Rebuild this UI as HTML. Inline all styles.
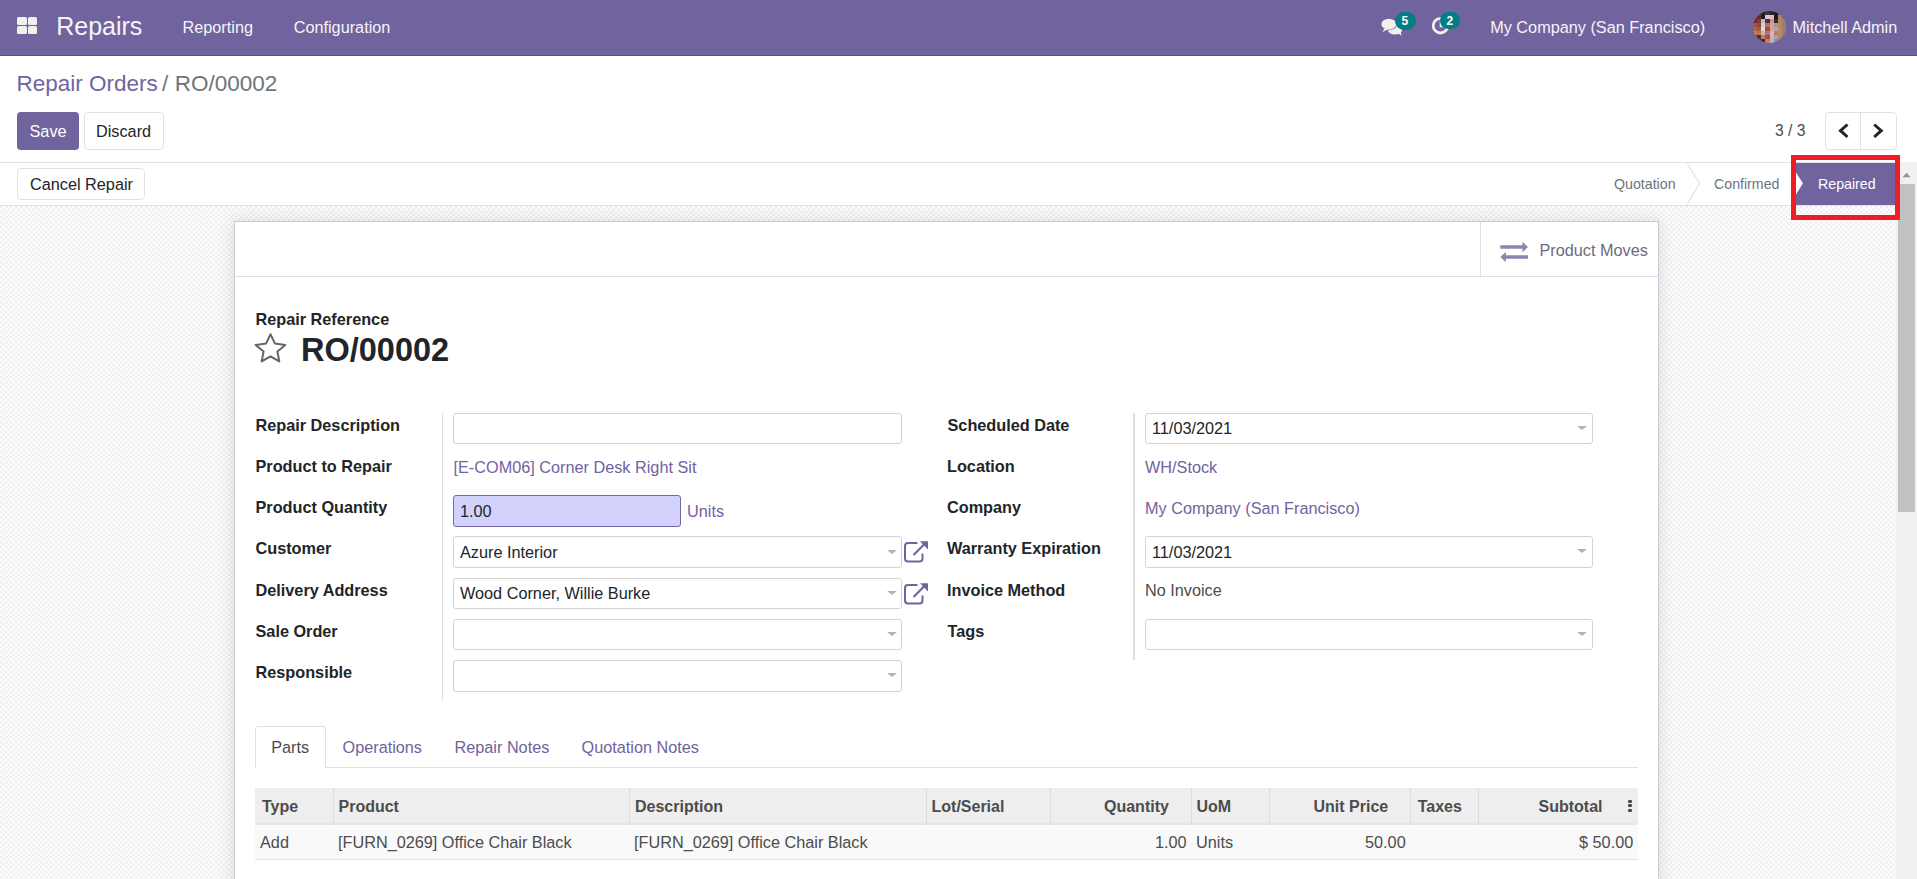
<!DOCTYPE html>
<html><head><meta charset="utf-8">
<style>
*{box-sizing:border-box;margin:0;padding:0}
html,body{width:1917px;height:879px;overflow:hidden;background:#fff;font-family:"Liberation Sans",sans-serif;color:#212529}
.a{position:absolute}
.t{position:absolute;white-space:nowrap;line-height:1}
.nav{left:0;top:0;width:1917px;height:56px;background:#71639e;border-bottom:1px solid #5a4f86}
.nt{color:#f5f5f5;font-size:16.25px}
.btn{position:absolute;border:1px solid #dee2e6;border-radius:4px;background:#fff}
.lbl{font-weight:bold;font-size:16.25px;color:#212529}
.inp{position:absolute;border:1px solid #d4d4d4;border-radius:3px;background:#fff;height:31px}
.val{font-size:16.25px;color:#212529}
.lnk{color:#71639e}
.caret{position:absolute;width:0;height:0;border-left:5px solid transparent;border-right:5px solid transparent;border-top:4.5px solid #b4b4b4}
.th{font-weight:bold;font-size:16px;color:#4c4c4c}
.td{font-size:16.25px;color:#4c4c4c}
.vsep{position:absolute;width:1px;background:#dcdcdc}
</style></head>
<body>
<!-- NAVBAR -->
<div class="a nav"></div>
<div class="a" style="left:17px;top:17px;width:9.5px;height:8px;background:#f0f0f0;border-radius:1.5px"></div>
<div class="a" style="left:27.5px;top:17px;width:9.5px;height:8px;background:#f0f0f0;border-radius:1.5px"></div>
<div class="a" style="left:17px;top:26px;width:9.5px;height:8px;background:#f0f0f0;border-radius:1.5px"></div>
<div class="a" style="left:27.5px;top:26px;width:9.5px;height:8px;background:#f0f0f0;border-radius:1.5px"></div>
<div class="t nt" style="left:56.2px;top:14.4px;font-size:25px">Repairs</div>
<div class="t nt" style="left:182.5px;top:18.8px">Reporting</div>
<div class="t nt" style="left:293.7px;top:18.8px">Configuration</div>
<div class="t nt" style="left:1490.2px;top:19.3px">My Company (San Francisco)</div>
<div class="t nt" style="left:1792.5px;top:19px">Mitchell Admin</div>

<!-- nav icons -->
<svg class="a" style="left:1378px;top:15px" width="26" height="24" viewBox="0 0 26 24">
 <ellipse cx="17" cy="14.6" rx="7.2" ry="5" fill="#f0f0f0"/>
 <path d="M19.5 18 L23.6 20.8 L22.6 16.5Z" fill="#f0f0f0"/>
 <ellipse cx="10.8" cy="9.2" rx="8.1" ry="6.1" fill="#71639e"/>
 <ellipse cx="10.8" cy="9.2" rx="7.4" ry="5.5" fill="#f0f0f0"/>
 <path d="M6.5 13.4 L4.3 17 L10 14.4Z" fill="#f0f0f0"/>
</svg>
<div class="a" style="left:1395px;top:12px;width:21px;height:18px;border-radius:9px;background:#017e84"></div>
<div class="t" style="left:1401.5px;top:15.2px;font-size:12px;font-weight:bold;color:#fff">5</div>
<svg class="a" style="left:1430px;top:15px" width="22" height="22" viewBox="0 0 22 22">
 <circle cx="10.5" cy="10.7" r="7.3" fill="none" stroke="#f0f0f0" stroke-width="2.8"/>
 <path d="M10.5 6 V11.5 H14" fill="none" stroke="#f0f0f0" stroke-width="1.6"/>
</svg>
<div class="a" style="left:1440px;top:12px;width:20px;height:17px;border-radius:9px;background:#017e84"></div>
<div class="t" style="left:1446.5px;top:15px;font-size:12px;font-weight:bold;color:#fff">2</div>
<div class="a" style="left:1753px;top:10.8px;width:33px;height:32px;border-radius:50%;overflow:hidden;background:#a07258"><i style="position:absolute;left:0.00px;top:0.00px;width:4.2px;height:4.1px;background:#7a6a98"></i><i style="position:absolute;left:4.12px;top:0.00px;width:4.2px;height:4.1px;background:#5a3a40"></i><i style="position:absolute;left:8.25px;top:0.00px;width:4.2px;height:4.1px;background:#2a2428"></i><i style="position:absolute;left:12.38px;top:0.00px;width:4.2px;height:4.1px;background:#3a3438"></i><i style="position:absolute;left:16.50px;top:0.00px;width:4.2px;height:4.1px;background:#2a2628"></i><i style="position:absolute;left:20.62px;top:0.00px;width:4.2px;height:4.1px;background:#1e1c20"></i><i style="position:absolute;left:24.75px;top:0.00px;width:4.2px;height:4.1px;background:#6a5a80"></i><i style="position:absolute;left:28.88px;top:0.00px;width:4.2px;height:4.1px;background:#7a6a98"></i><i style="position:absolute;left:0.00px;top:4.00px;width:4.2px;height:4.1px;background:#6a3a38"></i><i style="position:absolute;left:4.12px;top:4.00px;width:4.2px;height:4.1px;background:#6a2a24"></i><i style="position:absolute;left:8.25px;top:4.00px;width:4.2px;height:4.1px;background:#1e1c20"></i><i style="position:absolute;left:12.38px;top:4.00px;width:4.2px;height:4.1px;background:#d8c8d0"></i><i style="position:absolute;left:16.50px;top:4.00px;width:4.2px;height:4.1px;background:#e0b8c4"></i><i style="position:absolute;left:20.62px;top:4.00px;width:4.2px;height:4.1px;background:#201c20"></i><i style="position:absolute;left:24.75px;top:4.00px;width:4.2px;height:4.1px;background:#b08060"></i><i style="position:absolute;left:28.88px;top:4.00px;width:4.2px;height:4.1px;background:#8a7080"></i><i style="position:absolute;left:0.00px;top:8.00px;width:4.2px;height:4.1px;background:#702828"></i><i style="position:absolute;left:4.12px;top:8.00px;width:4.2px;height:4.1px;background:#803a30"></i><i style="position:absolute;left:8.25px;top:8.00px;width:4.2px;height:4.1px;background:#c0c0c8"></i><i style="position:absolute;left:12.38px;top:8.00px;width:4.2px;height:4.1px;background:#503030"></i><i style="position:absolute;left:16.50px;top:8.00px;width:4.2px;height:4.1px;background:#d090a0"></i><i style="position:absolute;left:20.62px;top:8.00px;width:4.2px;height:4.1px;background:#302a30"></i><i style="position:absolute;left:24.75px;top:8.00px;width:4.2px;height:4.1px;background:#b88460"></i><i style="position:absolute;left:28.88px;top:8.00px;width:4.2px;height:4.1px;background:#a08070"></i><i style="position:absolute;left:0.00px;top:12.00px;width:4.2px;height:4.1px;background:#a05040"></i><i style="position:absolute;left:4.12px;top:12.00px;width:4.2px;height:4.1px;background:#904838"></i><i style="position:absolute;left:8.25px;top:12.00px;width:4.2px;height:4.1px;background:#d0d0d8"></i><i style="position:absolute;left:12.38px;top:12.00px;width:4.2px;height:4.1px;background:#c07050"></i><i style="position:absolute;left:16.50px;top:12.00px;width:4.2px;height:4.1px;background:#d8a0a0"></i><i style="position:absolute;left:20.62px;top:12.00px;width:4.2px;height:4.1px;background:#b09090"></i><i style="position:absolute;left:24.75px;top:12.00px;width:4.2px;height:4.1px;background:#c08860"></i><i style="position:absolute;left:28.88px;top:12.00px;width:4.2px;height:4.1px;background:#908078"></i><i style="position:absolute;left:0.00px;top:16.00px;width:4.2px;height:4.1px;background:#b06040"></i><i style="position:absolute;left:4.12px;top:16.00px;width:4.2px;height:4.1px;background:#a05a40"></i><i style="position:absolute;left:8.25px;top:16.00px;width:4.2px;height:4.1px;background:#e0d8e0"></i><i style="position:absolute;left:12.38px;top:16.00px;width:4.2px;height:4.1px;background:#a04a40"></i><i style="position:absolute;left:16.50px;top:16.00px;width:4.2px;height:4.1px;background:#d0a0a0"></i><i style="position:absolute;left:20.62px;top:16.00px;width:4.2px;height:4.1px;background:#c0a0a0"></i><i style="position:absolute;left:24.75px;top:16.00px;width:4.2px;height:4.1px;background:#c08a60"></i><i style="position:absolute;left:28.88px;top:16.00px;width:4.2px;height:4.1px;background:#a08070"></i><i style="position:absolute;left:0.00px;top:20.00px;width:4.2px;height:4.1px;background:#c08058"></i><i style="position:absolute;left:4.12px;top:20.00px;width:4.2px;height:4.1px;background:#b07850"></i><i style="position:absolute;left:8.25px;top:20.00px;width:4.2px;height:4.1px;background:#d0b0b0"></i><i style="position:absolute;left:12.38px;top:20.00px;width:4.2px;height:4.1px;background:#c07060"></i><i style="position:absolute;left:16.50px;top:20.00px;width:4.2px;height:4.1px;background:#e0b0c0"></i><i style="position:absolute;left:20.62px;top:20.00px;width:4.2px;height:4.1px;background:#b08060"></i><i style="position:absolute;left:24.75px;top:20.00px;width:4.2px;height:4.1px;background:#c08a60"></i><i style="position:absolute;left:28.88px;top:20.00px;width:4.2px;height:4.1px;background:#9a8070"></i><i style="position:absolute;left:0.00px;top:24.00px;width:4.2px;height:4.1px;background:#6a4a50"></i><i style="position:absolute;left:4.12px;top:24.00px;width:4.2px;height:4.1px;background:#503030"></i><i style="position:absolute;left:8.25px;top:24.00px;width:4.2px;height:4.1px;background:#c08060"></i><i style="position:absolute;left:12.38px;top:24.00px;width:4.2px;height:4.1px;background:#a05050"></i><i style="position:absolute;left:16.50px;top:24.00px;width:4.2px;height:4.1px;background:#d0b0c0"></i><i style="position:absolute;left:20.62px;top:24.00px;width:4.2px;height:4.1px;background:#a0a0b0"></i><i style="position:absolute;left:24.75px;top:24.00px;width:4.2px;height:4.1px;background:#b08868"></i><i style="position:absolute;left:28.88px;top:24.00px;width:4.2px;height:4.1px;background:#8a7a90"></i><i style="position:absolute;left:0.00px;top:28.00px;width:4.2px;height:4.1px;background:#7a6a98"></i><i style="position:absolute;left:4.12px;top:28.00px;width:4.2px;height:4.1px;background:#5a4048"></i><i style="position:absolute;left:8.25px;top:28.00px;width:4.2px;height:4.1px;background:#402828"></i><i style="position:absolute;left:12.38px;top:28.00px;width:4.2px;height:4.1px;background:#c08060"></i><i style="position:absolute;left:16.50px;top:28.00px;width:4.2px;height:4.1px;background:#c0b0c0"></i><i style="position:absolute;left:20.62px;top:28.00px;width:4.2px;height:4.1px;background:#9090a0"></i><i style="position:absolute;left:24.75px;top:28.00px;width:4.2px;height:4.1px;background:#8a7a98"></i><i style="position:absolute;left:28.88px;top:28.00px;width:4.2px;height:4.1px;background:#7a6a98"></i></div>
</div>

<!-- CONTROL PANEL -->
<div class="t" style="left:16.5px;top:73.3px;font-size:22.5px"><span style="color:#71639e">Repair Orders</span><span style="color:#6c757d;margin-left:4.3px">/</span><span style="color:#6c757d;margin-left:6.3px">RO/00002</span></div>
<div class="a" style="left:17px;top:112px;width:62px;height:38px;background:#71639e;border-radius:4px"></div>
<div class="t" style="left:29.5px;top:123.3px;font-size:16.25px;color:#fff">Save</div>
<div class="btn" style="left:84px;top:112px;width:80px;height:38px"></div>
<div class="t" style="left:96px;top:123.3px;font-size:16.25px;color:#212529">Discard</div>
<div class="t" style="left:1775px;top:123px;font-size:15.7px;color:#4c4c4c">3 / 3</div>
<div class="btn" style="left:1825px;top:112px;width:72px;height:38px"></div>
<div class="vsep" style="left:1860px;top:112px;height:38px;background:#dee2e6"></div>

<svg class="a" style="left:1830px;top:118px" width="62" height="26" viewBox="0 0 62 26">
 <path d="M17.5 6.5 L10.5 12.7 L17.5 19" fill="none" stroke="#212529" stroke-width="3" stroke-linejoin="miter"/>
 <path d="M44.2 6.5 L51.2 12.7 L44.2 19" fill="none" stroke="#212529" stroke-width="3" stroke-linejoin="miter"/>
</svg>

<!-- STATUSBAR -->
<div class="a" style="left:0;top:162px;width:1917px;height:1px;background:#dee2e6"></div>
<div class="a" style="left:0;top:205px;width:1917px;height:1px;background:#dee2e6"></div>
<div class="btn" style="left:17px;top:168px;width:128px;height:32px"></div>
<div class="t" style="left:30px;top:176px;font-size:16.25px;color:#212529">Cancel Repair</div>
<div class="t" style="left:1614px;top:176.9px;font-size:14.2px;color:#6c757d">Quotation</div>
<div class="t" style="left:1714px;top:176.9px;font-size:14.2px;color:#6c757d">Confirmed</div>
<div class="a" style="left:1796px;top:163px;width:100px;height:42px;background:#71639e"></div>
<div class="t" style="left:1818px;top:176.9px;font-size:14.2px;color:#fff">Repaired</div>
<svg class="a" style="left:1680px;top:163px" width="30" height="42" viewBox="0 0 30 42">
 <path d="M7.4 1 L19.6 20.5 L7.4 40.6" fill="none" stroke="#dee2e6" stroke-width="1.2"/>
</svg>
<svg class="a" style="left:1796px;top:163px" width="10" height="42" viewBox="0 0 10 42">
 <path d="M0 9.4 L6.9 20.3 L0 31.6Z" fill="#fff"/>
</svg>


<!-- BACKGROUND -->
<svg class="a" style="left:0;top:206px" width="1896" height="673"><defs><pattern id="chk" width="5" height="5" patternUnits="userSpaceOnUse"><rect width="5" height="5" fill="#fff"/><rect width="2.5" height="2.5" fill="#eeeeee"/><rect x="2.5" y="2.5" width="2.5" height="2.5" fill="#eeeeee"/></pattern></defs><rect width="1896" height="673" fill="url(#chk)"/></svg>

<!-- SCROLLBAR -->
<div class="a" style="left:1896px;top:162px;width:21px;height:717px;background:#f1f1f1"></div>
<div class="a" style="left:1898px;top:184px;width:17px;height:328px;background:#c1c1c1"></div>
<svg class="a" style="left:1900px;top:170px" width="14" height="10" viewBox="0 0 14 10"><path d="M2.5 7.3 L6.5 2.8 L10.5 7.3Z" fill="#958daf"/></svg>

<!-- SHEET -->
<div class="a" style="left:234px;top:221px;width:1425px;height:700px;background:#fff;border:1px solid #c9c8d8;box-shadow:0 0 16px rgba(0,0,0,0.13)"></div>
<div class="a" style="left:235px;top:276px;width:1423px;height:1px;background:#dee2e6"></div>
<div class="vsep" style="left:1480px;top:222px;height:54px;background:#dee2e6"></div>

<svg class="a" style="left:1498px;top:240px" width="34" height="24" viewBox="0 0 34 24">
 <path d="M2.3 5.3 H24.5 V1.7 L30 7 L24.5 12.2 V8.8 H2.3Z" fill="#8787b0"/>
 <path d="M30 15.3 H7.8 V11.9 L2.3 17 L7.8 22 V18.7 H30Z" fill="#8787b0"/>
</svg>
<div class="t" style="left:1539.5px;top:242.2px;font-size:16.25px;color:#6b6b80">Product Moves</div>

<div class="t lbl" style="left:255.5px;top:311px">Repair Reference</div>
<svg class="a" style="left:250px;top:328px" width="42" height="40" viewBox="0 0 42 40">
 <path d="M20.5 6.2 L25 15.6 L35.3 16.9 L27.4 23.4 L29.3 33.4 L20.5 28.3 L11.7 33.4 L13.6 23.4 L5.7 16.9 L16 15.6Z" fill="none" stroke="#666" stroke-width="2" stroke-linejoin="round"/>
</svg>
<div class="t" style="left:301px;top:334.1px;font-size:32.5px;font-weight:bold;color:#212529">RO/00002</div>

<!-- left group -->
<div class="vsep" style="left:442px;top:413px;height:288px;background:#dcdee2"></div>
<div class="t lbl" style="left:255.5px;top:416.8px">Repair Description</div>
<div class="t lbl" style="left:255.5px;top:458px">Product to Repair</div>
<div class="t lbl" style="left:255.5px;top:499px">Product Quantity</div>
<div class="t lbl" style="left:255.5px;top:540px">Customer</div>
<div class="t lbl" style="left:255.5px;top:581.5px">Delivery Address</div>
<div class="t lbl" style="left:255.5px;top:622.5px">Sale Order</div>
<div class="t lbl" style="left:255.5px;top:663.5px">Responsible</div>

<div class="inp" style="left:453px;top:413px;width:449px"></div>
<div class="t val lnk" style="left:453.5px;top:458.5px">[E-COM06] Corner Desk Right Sit</div>
<div class="inp" style="left:453px;top:495px;height:32px;width:228px;background:#d2d2fc;border-color:#7467a3"></div>
<div class="t val" style="left:460px;top:503px">1.00</div>
<div class="t val" style="left:687px;top:503px;color:#71639e">Units</div>
<div class="inp" style="left:453px;top:536px;width:449px;height:32px"></div>
<div class="t val" style="left:460px;top:544px">Azure Interior</div>
<div class="inp" style="left:453px;top:578px;width:449px"></div>
<div class="t val" style="left:460px;top:585px">Wood Corner, Willie Burke</div>
<div class="inp" style="left:453px;top:619px;width:449px"></div>
<div class="inp" style="left:453px;top:660px;width:449px;height:32px"></div>

<!-- right group -->
<div class="vsep" style="left:1133px;top:413px;height:247px;width:2px;background:#dcdee2"></div>
<div class="t lbl" style="left:947.5px;top:416.8px">Scheduled Date</div>
<div class="t lbl" style="left:947px;top:458px">Location</div>
<div class="t lbl" style="left:947px;top:499px">Company</div>
<div class="t lbl" style="left:947px;top:540px">Warranty Expiration</div>
<div class="t lbl" style="left:947px;top:581.5px">Invoice Method</div>
<div class="t lbl" style="left:947.5px;top:622.5px">Tags</div>

<div class="inp" style="left:1145px;top:413px;width:448px"></div>
<div class="t val" style="left:1152px;top:420px">11/03/2021</div>
<div class="t val lnk" style="left:1145px;top:458.5px">WH/Stock</div>
<div class="t val lnk" style="left:1145px;top:499.5px">My Company (San Francisco)</div>
<div class="inp" style="left:1145px;top:536px;width:448px;height:32px"></div>
<div class="t val" style="left:1152px;top:544px">11/03/2021</div>
<div class="t val" style="left:1145px;top:581.5px;color:#4c4c4c">No Invoice</div>
<div class="inp" style="left:1145px;top:619px;width:448px"></div>

<!-- carets -->
<div class="caret" style="left:887px;top:550px"></div>
<div class="caret" style="left:887px;top:591px"></div>
<div class="caret" style="left:887px;top:632px"></div>
<div class="caret" style="left:887px;top:673px"></div>
<div class="caret" style="left:1577px;top:426px"></div>
<div class="caret" style="left:1577px;top:549px"></div>
<div class="caret" style="left:1577px;top:632px"></div>
<svg class="a" style="left:900px;top:538px" width="32" height="28" viewBox="0 0 32 28">
 <path d="M17.5 5 H8 Q5 5 5 8 V20.5 Q5 23.5 8 23.5 H19.5 Q22.5 23.5 22.5 20.5 V15.5" fill="none" stroke="#71639e" stroke-width="2"/>
 <path d="M13.5 17 L25 5.5" fill="none" stroke="#71639e" stroke-width="2.2"/>
 <path d="M20 3.3 H28 V11.5Z" fill="#71639e"/>
</svg>
<svg class="a" style="left:900px;top:579.5px" width="32" height="28" viewBox="0 0 32 28">
 <path d="M17.5 5 H8 Q5 5 5 8 V20.5 Q5 23.5 8 23.5 H19.5 Q22.5 23.5 22.5 20.5 V15.5" fill="none" stroke="#71639e" stroke-width="2"/>
 <path d="M13.5 17 L25 5.5" fill="none" stroke="#71639e" stroke-width="2.2"/>
 <path d="M20 3.3 H28 V11.5Z" fill="#71639e"/>
</svg>

<!-- TABS -->
<div class="a" style="left:255px;top:767px;width:1383px;height:1px;background:#dee2e6"></div>
<div class="a" style="left:255px;top:726px;width:71px;height:42px;background:#fff;border:1px solid #dee2e6;border-bottom:none;border-radius:3px 3px 0 0"></div>
<div class="t" style="left:271.2px;top:739px;font-size:16.25px;color:#4c4c4c">Parts</div>
<div class="t lnk" style="left:342.5px;top:739px;font-size:16.25px">Operations</div>
<div class="t lnk" style="left:454.5px;top:739px;font-size:16.25px">Repair Notes</div>
<div class="t lnk" style="left:581.5px;top:739px;font-size:16.25px">Quotation Notes</div>

<!-- TABLE -->
<div class="a" style="left:255px;top:788px;width:1383px;height:37px;background:#eeeeee"></div>
<div class="a" style="left:255px;top:825px;width:1383px;height:34px;background:#f9f9f9"></div>
<div class="a" style="left:255px;top:823px;width:1383px;height:2px;background:#e6e7ea"></div>
<div class="a" style="left:255px;top:859px;width:1383px;height:1px;background:#dee2e6"></div>
<div class="vsep" style="left:333px;top:788px;height:37px;background:#dcdcdc"></div>
<div class="vsep" style="left:629px;top:788px;height:37px;background:#dcdcdc"></div>
<div class="vsep" style="left:926px;top:788px;height:37px;background:#dcdcdc"></div>
<div class="vsep" style="left:1050px;top:788px;height:37px;background:#dcdcdc"></div>
<div class="vsep" style="left:1191px;top:788px;height:37px;background:#dcdcdc"></div>
<div class="vsep" style="left:1269px;top:788px;height:37px;background:#dcdcdc"></div>
<div class="vsep" style="left:1410px;top:788px;height:37px;background:#dcdcdc"></div>
<div class="vsep" style="left:1478px;top:788px;height:37px;background:#dcdcdc"></div>
<div class="a" style="left:1628px;top:799.5px;width:4px;height:3px;background:#4c4c4c;border-radius:1px"></div>
<div class="a" style="left:1628px;top:804px;width:4px;height:3px;background:#4c4c4c;border-radius:1px"></div>
<div class="a" style="left:1628px;top:808.5px;width:4px;height:3px;background:#4c4c4c;border-radius:1px"></div>
<div class="t th" style="left:262px;top:798.7px">Type</div>
<div class="t th" style="left:338.5px;top:798.7px">Product</div>
<div class="t th" style="left:635px;top:798.7px">Description</div>
<div class="t th" style="left:931.5px;top:798.7px">Lot/Serial</div>
<div class="t th" style="left:1104px;top:798.7px">Quantity</div>
<div class="t th" style="left:1196.5px;top:798.7px">UoM</div>
<div class="t th" style="left:1313.5px;top:798.7px">Unit Price</div>
<div class="t th" style="left:1417.7px;top:798.7px">Taxes</div>
<div class="t th" style="left:1538.5px;top:798.7px">Subtotal</div>
<div class="t td" style="left:260px;top:834px">Add</div>
<div class="t td" style="left:338px;top:834px">[FURN_0269] Office Chair Black</div>
<div class="t td" style="left:634px;top:834px">[FURN_0269] Office Chair Black</div>
<div class="t td" style="left:1155px;top:834px">1.00</div>
<div class="t td" style="left:1196px;top:834px">Units</div>
<div class="t td" style="left:1365px;top:834px">50.00</div>
<div class="t td" style="left:1579px;top:834px">$ 50.00</div>

<!-- RED HIGHLIGHT -->
<div class="a" style="left:1791px;top:155px;width:109px;height:65px;border:5px solid #ee1c24"></div>
</body></html>
